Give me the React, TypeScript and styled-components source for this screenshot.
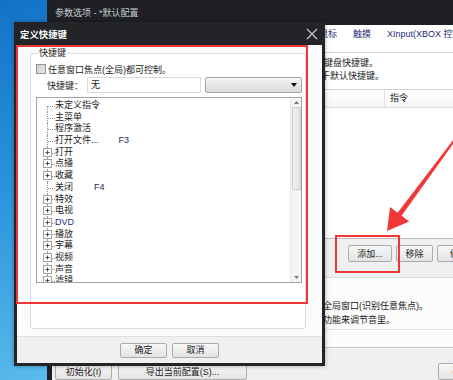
import styled, { createGlobalStyle } from "styled-components";

const GlobalStyle = createGlobalStyle`
  *, *::before, *::after { box-sizing: border-box; }
  html, body { margin: 0; padding: 0; }
  body {
    font-family: "Liberation Sans", "Noto Sans CJK SC", sans-serif;
    font-size: 9px;
    color: #1b1b1b;
  }
`;

const Desktop = styled.div`
  position: relative;
  width: 453px;
  height: 380px;
  overflow: hidden;
  background: linear-gradient(160deg, #1273c6 0%, #2b93dd 35%, #56b8ea 70%, #8ad3f3 100%);
`;

/* ---------- back window (参数选项) ---------- */

const BackWindow = styled.div`
  position: absolute;
  left: 47px;
  top: 0;
  width: 441px;
  height: 400px;
  display: flex;
  flex-direction: column;
  background: #1e2024;
  border-left: 5px solid #1e2024;
`;

const WinTitle = styled.div`
  height: 25px;
  margin-left: -5px;
  padding-left: 8px;
  display: flex;
  align-items: center;
  color: #c9ccd1;
  font-size: 9px;
`;

const Tabs = styled.div`
  height: 28px;
  display: flex;
  align-items: flex-start;
  padding: 3px 0 0 225px;
  background: #fff;
  border-bottom: 1px solid #dadada;
`;

const Tab = styled.span`
  padding: 0 8px;
  line-height: 12px;
  color: #1f2a78;
  white-space: nowrap;
`;

const Desc = styled.div`
  height: 36px;
  padding: 4px 0 0 164px;
  background: #fff;
  line-height: 13px;
  white-space: nowrap;
`;

const ListHeader = styled.div`
  height: 19px;
  display: flex;
  background: linear-gradient(#ffffff, #f6f6f6);
  border-top: 1px solid #d3d3d3;
  border-bottom: 1px solid #dcdcdc;
`;

const HeaderCell = styled.div<{ $w?: number }>`
  ${(p) => (p.$w ? `width: ${p.$w}px;` : "flex: 1;")}
  padding-left: 5px;
  line-height: 17px;
  border-right: 1px solid #e2e2e2;
`;

const ListBody = styled.div`
  height: 131px;
  background: #fff;
  border-bottom: 1px solid #bdbdbd;
`;

const ButtonRow = styled.div`
  height: 39px;
  display: flex;
  gap: 4px;
  padding: 6px 0 0 296px;
  background: #f0f0f0;
  border-bottom: 1px solid #dedede;
`;

const Button = styled.button<{ $w: number }>`
  width: ${(p) => p.$w}px;
  height: 17px;
  flex: none;
  padding: 0;
  font: inherit;
  color: #1b1b1b;
  background: linear-gradient(#f7f7f7, #e3e3e3);
  border: 1px solid #acacac;
  border-radius: 2px;
  white-space: nowrap;
`;

const Info = styled.div`
  height: 52px;
  padding: 21px 0 0 181px;
  background: #fbfbfb;
  border-bottom: 1px solid #e4e4e4;
  line-height: 14px;
  white-space: nowrap;
`;

const Spacer = styled.div`
  height: 17px;
  background: #fbfbfb;
`;

const BottomBar = styled.div`
  flex: 1;
  display: flex;
  justify-content: space-between;
  padding: 15px 3px 0;
  background: #f0f0f0;
  border-top: 1px solid #c8c8c8;
`;

const BottomGroup = styled.div`
  display: flex;
  gap: 6px;
`;

/* ---------- dialog (定义快捷键) ---------- */

const Dialog = styled.div`
  position: absolute;
  left: 14px;
  top: 22px;
  width: 311px;
  height: 344px;
  display: flex;
  flex-direction: column;
  padding: 0 3px 3px;
  background: #222428;
  box-shadow: 0 0 4px rgba(0, 0, 0, 0.35);
`;

const DialogTitle = styled.div`
  height: 23px;
  display: flex;
  align-items: center;
  justify-content: space-between;
  padding: 0 4px 0 3px;
  color: #fff;
  font-weight: bold;
  font-size: 9.4px;
`;

const DialogBody = styled.div`
  flex: 1;
  display: flex;
  flex-direction: column;
  background: #fbfbfb;
`;

const DialogContent = styled.div`
  flex: 1;
  padding: 2px 16px 7px 13px;
  display: flex;
`;

const Group = styled.fieldset`
  flex: 1;
  margin: 0;
  padding: 0 3px 0 5px;
  border: 1px solid #d5dde3;
  border-radius: 3px;
  background: #fff;
  min-width: 0;
`;

const Legend = styled.legend`
  margin-left: 2px;
  padding: 0 1px;
  line-height: 12px;
`;

const CheckRow = styled.label`
  margin-top: 4px;
  height: 12px;
  display: flex;
  align-items: center;
  gap: 2px;
`;

const CheckBox = styled.span`
  width: 10px;
  height: 10px;
  border: 1px solid #949494;
  background: linear-gradient(135deg, #cfcfcf, #e9e9e9);
`;

const KeyRow = styled.div`
  margin-top: 2px;
  height: 16px;
  display: flex;
  align-items: center;
`;

const KeyLabel = styled.span`
  width: 51px;
  height: 16px;
  padding: 3px 0 0 11px;
  line-height: 13px;
`;

const KeyInput = styled.div`
  width: 114px;
  height: 16px;
  padding-left: 3px;
  line-height: 15px;
  background: #fff;
  border: 1px solid #dadada;
`;

const Combo = styled.div`
  width: 97px;
  height: 16px;
  margin-left: 4px;
  display: flex;
  align-items: center;
  justify-content: flex-end;
  padding-right: 4px;
  background: linear-gradient(#f5f5f5, #dadada);
  border: 1px solid #a5a5a5;
  border-radius: 2px;
`;

const Tree = styled.div`
  margin-top: 4px;
  height: 186px;
  display: flex;
  background: #fff;
  border: 1px solid #a2a2a2;
  overflow: hidden;
`;

const TreeList = styled.div`
  flex: 1;
  padding-top: 2px;
`;

const TreeRow = styled.div`
  height: 11.7px;
  display: flex;
  align-items: center;
  line-height: 11.7px;
  white-space: nowrap;
`;

const Branch = styled.span<{ $first?: boolean }>`
  position: relative;
  width: 18px;
  height: 100%;
  flex: none;

  &::before {
    content: "";
    position: absolute;
    left: 10px;
    top: ${(p) => (p.$first ? "50%" : "0")};
    bottom: 0;
    border-left: 1px dotted #9a9a9a;
  }

  &::after {
    content: "";
    position: absolute;
    left: 11px;
    right: 0;
    top: 50%;
    border-top: 1px dotted #9a9a9a;
  }

  svg {
    position: absolute;
    left: 6px;
    top: 1px;
    z-index: 1;
  }
`;

const Label = styled.span<{ $blue?: boolean }>`
  color: ${(p) => (p.$blue ? "#22307a" : "#1b1b1b")};
`;

const Shortcut = styled.span<{ $gap: number }>`
  margin-left: ${(p) => p.$gap}px;
  color: #2a2a5a;
`;

const ScrollBar = styled.div`
  width: 11px;
  display: flex;
  flex-direction: column;
  align-items: center;
  background: #f4f4f4;
  border-left: 1px solid #e8e8e8;
`;

const ScrollArrow = styled.div`
  height: 9px;
  width: 100%;
  display: flex;
  align-items: center;
  justify-content: center;
`;

const Thumb = styled.div`
  width: 9px;
  height: 83px;
  background: linear-gradient(90deg, #f1f1f1, #e2e2e2);
  border: 1px solid #cbcbcb;
  border-radius: 1px;
`;

const ScrollTrack = styled.div`
  flex: 1;
`;

const DialogFooter = styled.div`
  height: 27px;
  display: flex;
  justify-content: center;
  gap: 5px;
  padding-top: 6px;
  background: #f0f0f0;
  border-top: 1px solid #dfdfdf;
`;

const SmallButton = styled(Button)`
  height: 15px;
  line-height: 13px;
`;

/* ---------- annotations ---------- */

const RedBox = styled.div<{ $x: number; $y: number; $w: number; $h: number }>`
  position: absolute;
  left: ${(p) => p.$x}px;
  top: ${(p) => p.$y}px;
  width: ${(p) => p.$w}px;
  height: ${(p) => p.$h}px;
  border: 2px solid #ef3535;
  pointer-events: none;
`;

const Overlay = styled.svg`
  position: absolute;
  left: 0;
  top: 0;
  pointer-events: none;
`;

const PlusBox = () => (
  <svg width="9" height="9" viewBox="0 0 9 9">
    <rect x="0.5" y="0.5" width="8" height="8" fill="#fff" stroke="#a4a4a4" />
    <path d="M2.5 4.5h4M4.5 2.5v4" stroke="#4b4b4b" strokeWidth="1" />
  </svg>
);

const Caret = ({ up }: { up?: boolean }) => (
  <svg width="5" height="3" viewBox="0 0 5 3">
    <path d={up ? "M0 3L2.5 0L5 3Z" : "M0 0L2.5 3L5 0Z"} fill="#7a7a7a" />
  </svg>
);

type Item = { name: string; expand?: boolean; key?: string; gap?: number; blue?: boolean };

const items: Item[] = [
  { name: "未定义指令" },
  { name: "主菜单" },
  { name: "程序激活" },
  { name: "打开文件...", key: "F3", gap: 20 },
  { name: "打开", expand: true },
  { name: "点播", expand: true },
  { name: "收藏", expand: true },
  { name: "关闭", key: "F4", gap: 21 },
  { name: "特效", expand: true },
  { name: "电视", expand: true },
  { name: "DVD", expand: true, blue: true },
  { name: "播放", expand: true },
  { name: "字幕", expand: true },
  { name: "视频", expand: true },
  { name: "声音", expand: true },
  { name: "滤镜", expand: true },
  { name: "配置", expand: true },
];

export default function App() {
  return (
    <Desktop>
      <GlobalStyle />

      <BackWindow>
        <WinTitle>参数选项 - *默认配置</WinTitle>
        <Tabs>
          <Tab>键盘</Tab>
          <Tab>鼠标</Tab>
          <Tab>触摸</Tab>
          <Tab>XInput(XBOX 控制器)</Tab>
        </Tabs>
        <Desc>
          <div>在此可以自定义各项功能的键盘快捷键。</div>
          <div>* 号标记的项目其设置不同于默认快捷键。</div>
        </Desc>
        <ListHeader>
          <HeaderCell $w={333} />
          <HeaderCell>指令</HeaderCell>
        </ListHeader>
        <ListBody />
        <ButtonRow>
          <Button $w={44}>添加...</Button>
          <Button $w={37}>移除</Button>
          <Button $w={44}>修改</Button>
        </ButtonRow>
        <Info>
          <div>勾选后快捷键将作用于全局窗口(识别任意焦点)。</div>
          <div>可以使用媒体键盘上的功能来调节音里。</div>
        </Info>
        <Spacer />
        <BottomBar>
          <BottomGroup>
            <Button $w={57}>初始化(I)</Button>
            <Button $w={129}>导出当前配置(S)...</Button>
          </BottomGroup>
          <Button $w={47}>确定</Button>
        </BottomBar>
      </BackWindow>

      <Dialog>
        <DialogTitle>
          <span>定义快捷键</span>
          <svg width="12" height="12" viewBox="0 0 12 12">
            <path d="M1 1L11 11M11 1L1 11" stroke="#c4c6ca" strokeWidth="1.3" />
          </svg>
        </DialogTitle>
        <DialogBody>
          <DialogContent>
            <Group>
              <Legend>快捷键</Legend>
              <CheckRow>
                <CheckBox />
                <span>任意窗口焦点(全局)都可控制。</span>
              </CheckRow>
              <KeyRow>
                <KeyLabel>快捷键：</KeyLabel>
                <KeyInput>无</KeyInput>
                <Combo>
                  <svg width="6" height="4" viewBox="0 0 6 4">
                    <path d="M0 0L3 4L6 0Z" fill="#111" />
                  </svg>
                </Combo>
              </KeyRow>
              <Tree>
                <TreeList>
                  {items.map((it, i) => (
                    <TreeRow key={it.name}>
                      <Branch $first={i === 0}>{it.expand && <PlusBox />}</Branch>
                      <Label $blue={it.blue}>{it.name}</Label>
                      {it.key && <Shortcut $gap={it.gap ?? 20}>{it.key}</Shortcut>}
                    </TreeRow>
                  ))}
                </TreeList>
                <ScrollBar>
                  <ScrollArrow>
                    <Caret up />
                  </ScrollArrow>
                  <Thumb />
                  <ScrollTrack />
                  <ScrollArrow>
                    <Caret />
                  </ScrollArrow>
                </ScrollBar>
              </Tree>
            </Group>
          </DialogContent>
          <DialogFooter>
            <SmallButton $w={47}>确定</SmallButton>
            <SmallButton $w={47}>取消</SmallButton>
          </DialogFooter>
        </DialogBody>
      </Dialog>

      <RedBox $x={16} $y={45} $w={292} $h={259} />
      <RedBox $x={335} $y={235} $w={65} $h={38} />
      <Overlay width="453" height="380" viewBox="0 0 453 380">
        <polygon
          points="387,231 409.2,221.4 401.6,215.7 456.8,138.6 455.2,137.4 397.6,212.7 390,207"
          fill="#f03838"
        />
      </Overlay>
    </Desktop>
  );
}
